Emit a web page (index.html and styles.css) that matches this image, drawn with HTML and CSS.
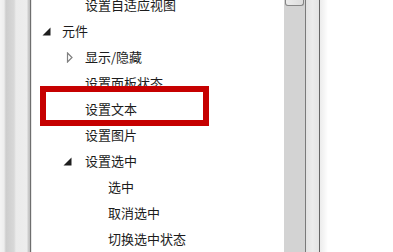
FILE: index.html
```html
<!DOCTYPE html>
<html lang="zh">
<head>
<meta charset="utf-8">
<title>元件</title>
<link rel="stylesheet" href="styles.css">
</head>
<body>
<div class="window">
  <div class="frame-left"></div>
  <div class="tree">
    <div class="row l2"><span class="exp"></span><span class="label">设置自适应视图</span></div>
    <div class="row l1"><span class="exp"><svg class="tri-open" width="9" height="9" viewBox="0 0 9 9"><path d="M8.5 0.5 L8.5 8.5 L0.5 8.5 Z" fill="#1e1e1e"/></svg></span><span class="label">元件</span></div>
    <div class="row l2"><span class="exp"><svg class="tri-closed" width="8" height="11" viewBox="0 0 8 11"><path d="M2.5 1 L7 5.5 L2.5 10 Z" fill="#fff" stroke="#808080" stroke-width="1.2"/></svg></span><span class="label">显示/隐藏</span></div>
    <div class="row l2"><span class="exp"></span><span class="label">设置面板状态</span></div>
    <div class="row l2"><span class="exp"></span><span class="label">设置文本</span></div>
    <div class="row l2"><span class="exp"></span><span class="label">设置图片</span></div>
    <div class="row l2"><span class="exp"><svg class="tri-open shift" width="9" height="9" viewBox="0 0 9 9"><path d="M8.5 0.5 L8.5 8.5 L0.5 8.5 Z" fill="#1e1e1e"/></svg></span><span class="label">设置选中</span></div>
    <div class="row l3"><span class="exp"></span><span class="label">选中</span></div>
    <div class="row l3"><span class="exp"></span><span class="label">取消选中</span></div>
    <div class="row l3"><span class="exp"></span><span class="label">切换选中状态</span></div>
  </div>
  <div class="scrollbar">
    <div class="track"><div class="thumb"></div></div>
    <div class="line"></div>
    <div class="band"></div>
    <div class="line dark"></div>
    <div class="edge"></div>
  </div>
  <div class="rest"></div>
</div>
<div class="highlight"></div>
</body>
</html>
```

FILE: styles.css
```css
html, body {
  margin: 0;
  padding: 0;
  width: 393px;
  height: 252px;
  overflow: hidden;
  background: #ffffff;
  font-family: "Noto Sans CJK SC", "Microsoft YaHei", sans-serif;
}

.window {
  display: flex;
  height: 252px;
}

.frame-left {
  width: 32px;
  flex: none;
  background: linear-gradient(to right,
    #f4f4f4 0px, #eeeeee 4px,
    #cdcdcd 6px, #d8d8d8 14px,
    #ebebeb 16px, #ededed 27px,
    #cfcfcf 28px, #bdbdbd 30px,
    #6e6e6e 30px, #6e6e6e 31px,
    #e6e6e6 31px, #e6e6e6 32px);
}

.tree {
  width: 252px;
  flex: none;
  background: #ffffff;
  margin-top: -8px;
}

.row {
  display: flex;
  align-items: center;
  height: 26px;
  font-size: 13px;
  color: #1c1c1c;
  white-space: nowrap;
}

.row.l1 { padding-left: 10px; }
.row.l2 { padding-left: 33px; }
.row.l3 { padding-left: 56px; }

.exp {
  width: 20px;
  height: 26px;
  flex: none;
  display: flex;
  align-items: center;
}

.tri-open {
  display: block;
  margin-top: 1px;
}

.tri-open.shift {
  margin-left: -2px;
}

.tri-closed {
  display: block;
  margin-left: 0px;
}

.label {
  line-height: 26px;
}

.scrollbar {
  display: flex;
  flex: none;
  height: 252px;
}

.track {
  width: 21px;
  background: #d3d3d3;
}

.thumb {
  height: 5px;
  margin: 0 1px;
  background: linear-gradient(to right, #ececec, #dcdcdc);
  border: 1px solid #858585;
  border-top: none;
  border-radius: 0 0 3px 3px;
}

.line {
  width: 1px;
  background: #7a7a7a;
}

.line.dark {
  background: #666666;
}

.band {
  width: 13px;
  background: linear-gradient(to right, #e2e2e2, #ececec 50%, #e4e4e4);
}

.edge {
  width: 8px;
  background: linear-gradient(to right, #ececec, #f7f7f7 60%, #ffffff);
}

.rest {
  flex: 1;
  background: #ffffff;
}

.highlight {
  position: absolute;
  left: 40px;
  top: 86px;
  width: 157px;
  height: 28px;
  border: 6px solid #c60000;
}
```
